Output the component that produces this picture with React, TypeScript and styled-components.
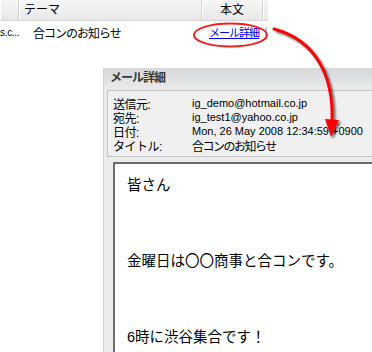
import styled, { createGlobalStyle } from 'styled-components';

const GlobalStyle = createGlobalStyle`
    html, body {
        margin: 0;
        padding: 0;
        background: #fff;
    }
`;

const jp = `"Liberation Sans", "Noto Sans CJK JP", sans-serif`;

const headers = [
    { label: '', width: 19, align: 'left' },
    { label: 'テーマ', width: 183, align: 'left' },
    { label: '本文', width: 61, align: 'center' },
    { label: '', width: 5, align: 'left' },
];

const fields = [
    { label: '送信元:', value: 'ig_demo@hotmail.co.jp' },
    { label: '宛先:', value: 'ig_test1@yahoo.co.jp' },
    { label: '日付:', value: 'Mon, 26 May 2008 12:34:59 +0900' },
    { label: 'タイトル:', value: '合コンのお知らせ' },
];

const bodyLines = ['皆さん', '金曜日は〇〇商事と合コンです。', '6時に渋谷集合です！'];

export default function App() {
    return (
        <Page>
            <GlobalStyle />
            <ListHeader>
                {headers.map((h, i) => (
                    <HeaderCell key={i} $width={h.width} $align={h.align}>{h.label}</HeaderCell>
                ))}
            </ListHeader>
            <ListRow>
                <RowCell $width={19} $small>s.c...</RowCell>
                <RowCell $width={183} $indent={14} $tight>合コンのお知らせ</RowCell>
                <RowCell $width={61} $indent={7}>
                    <DetailLink href="#">メール詳細</DetailLink>
                </RowCell>
                <Cursor />
            </ListRow>

            <Dialog>
                <TitleBar>メール詳細</TitleBar>
                <HeaderPanel>
                    {fields.map((f) => (
                        <FieldRow key={f.label}>
                            <FieldLabel>{f.label}</FieldLabel>
                            <FieldValue $jp={f.label === 'タイトル:'}>{f.value}</FieldValue>
                        </FieldRow>
                    ))}
                </HeaderPanel>
                <BodyBox>
                    {bodyLines.map((line) => (
                        <BodyLine key={line}>{line}</BodyLine>
                    ))}
                </BodyBox>
            </Dialog>

            <Overlay width="372" height="352" viewBox="0 0 372 352">
                <defs>
                    <filter id="blur" x="-20%" y="-20%" width="140%" height="140%">
                        <feGaussianBlur stdDeviation="1.2" />
                    </filter>
                </defs>
                <ellipse cx="230.5" cy="35" rx="36.5" ry="11.5" fill="none" stroke="#ee2222" strokeWidth="2" />
                <g filter="url(#blur)" opacity="0.55" transform="translate(2 2)">
                    <path d="M274 29 C315 40 334 75 332 122" fill="none" stroke="#000" strokeWidth="3" />
                    <polygon points="325,119 339,120 331,137" fill="#000" />
                </g>
                <path d="M274 29 C315 40 334 75 332 122" fill="none" stroke="#ff0000" strokeWidth="3" strokeLinecap="round" />
                <polygon points="325,119 339,120 331,137" fill="#ff0000" />
            </Overlay>
        </Page>
    );
}

const Page = styled.div`
    position: relative;
    width: 372px;
    height: 352px;
    overflow: hidden;
    background: #fff;
    font-family: ${jp};
    color: #000;
`;

const ListHeader = styled.div`
    display: flex;
    width: 268px;
    height: 20px;
    background: linear-gradient(#f6f6f6, #e8e8e8);
    border-bottom: 1px solid #d6d6d6;
`;

const HeaderCell = styled.div<{ $width: number; $align: string }>`
    width: ${({ $width }) => $width}px;
    flex-shrink: 0;
    box-sizing: border-box;
    border-right: 1px solid #d2d2d2;
    box-shadow: inset 1px 0 0 #fff;
    padding: 0 5px;
    font-size: 12px;
    line-height: 20px;
    text-align: ${({ $align }) => $align};
    &:last-child {
        border-right: none;
    }
`;

const ListRow = styled.div`
    display: flex;
    align-items: center;
    height: 22px;
    font-size: 12px;
`;

const RowCell = styled.div<{ $width: number; $indent?: number; $tight?: boolean; $small?: boolean }>`
    width: ${({ $width }) => $width}px;
    flex-shrink: 0;
    padding-left: ${({ $indent }) => $indent ?? 0}px;
    box-sizing: border-box;
    white-space: nowrap;
    font-size: ${({ $small }) => ($small ? '10px' : '12px')};
    letter-spacing: ${({ $tight, $small }) => ($tight ? '-1px' : $small ? '-0.3px' : '0')};
`;

const DetailLink = styled.a`
    color: #0000ee;
    text-decoration: underline;
    font-size: 11px;
    letter-spacing: -1px;
`;

const Cursor = styled.div`
    width: 2px;
    height: 10px;
    margin-left: 2px;
    background: #b4cdf0;
`;

const Dialog = styled.div`
    width: 300px;
    margin: 25px 0 0 103px;
    height: 300px;
    background: #ececec;
    border-left: 1px solid #d0d0d0;
    border-top: 1px solid #d8d8d8;
    box-sizing: border-box;
`;

const TitleBar = styled.div`
    height: 21px;
    padding-left: 6px;
    background: linear-gradient(#d6d8da, #ebebeb);
    font-size: 12px;
    font-weight: bold;
    line-height: 18px;
    color: #3a3a3a;
    letter-spacing: -1px;
`;

const HeaderPanel = styled.div`
    margin-left: 3px;
    padding: 5px 0 4px 5px;
    border: 1px solid #c4c4c4;
    border-right: none;
    background: #f0f0f0;
`;

const FieldRow = styled.div`
    display: flex;
    height: 14px;
    align-items: center;
    font-size: 12px;
`;

const FieldLabel = styled.div`
    width: 79px;
    flex-shrink: 0;
    letter-spacing: -0.5px;
`;

const FieldValue = styled.div<{ $jp?: boolean }>`
    white-space: nowrap;
    font-size: ${({ $jp }) => ($jp ? '12px' : '11px')};
    letter-spacing: ${({ $jp }) => ($jp ? '-1.5px' : '0')};
`;

const BodyBox = styled.div`
    margin: 5px 0 0 9px;
    height: 200px;
    padding: 9px 12px;
    background: #fff;
    border: 2px solid #6e6e6e;
    border-right: none;
    border-bottom: none;
`;

const BodyLine = styled.p`
    margin: 0 0 51px;
    font-size: 14.5px;
    line-height: 25px;
    white-space: nowrap;
`;

const Overlay = styled.svg`
    position: absolute;
    top: 0;
    left: 0;
    pointer-events: none;
`;
